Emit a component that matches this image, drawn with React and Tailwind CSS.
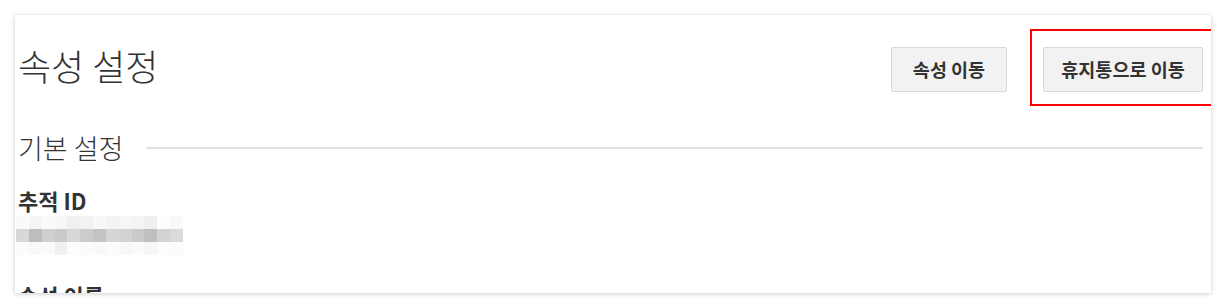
const font = { fontFamily: '"Noto Sans CJK KR", "Noto Sans", sans-serif' };

const blurTop = ["#fafafa", "#f5f5f5", "#fafafa", "#f8f8f8", "#f0f0f0", "#f2f2f2", "#f8f8f8", "#f3f3f3", "#f6f6f6", "#f4f4f4", "#efefef", "#fdfdfd", "#f9f9f9"];
const blurMid = ["#d8d8d8", "#bdbdbd", "#d0d0d0", "#cacaca", "#d8d8d8", "#cccccc", "#c4c4c4", "#d6d6d6", "#d3d3d3", "#cbcbcb", "#bfbfbf", "#d3d3d3", "#dadada"];
const blurBot = ["#fbfbfb", "#f8f8f8", "#fafafa", "#f0f0f0", "#fcfcfc", "#fbfbfb", "#f9f9f9", "#fcfcfc", "#f8f8f8", "#fafafa", "#f7f7f7", "#fcfcfc", "#fbfbfb"];

function BlurredId() {
	return (
		<div className="flex flex-col w-[167px]">
			{[blurTop, blurMid, blurBot].map((row, i) => (
				<div key={i} className="flex h-[13px]">
					{row.map((c, j) => (
						<div key={j} className="flex-1" style={{ backgroundColor: c }} />
					))}
				</div>
			))}
		</div>
	);
}

export default function App() {
	return (
		<div className="bg-white w-[1226px] h-[308px] pt-[15px] pl-[15px]" style={font}>
			<div className="relative w-[1196px] h-[278px] bg-white overflow-hidden shadow-[0_1px_5px_rgba(0,0,0,0.2)]">
				{/* Header */}
				<div className="flex items-start justify-between pl-[3px] pr-[8px]">
					<h1 className="mt-[26px] text-[36px] leading-[48px] font-light text-[#333]">속성 설정</h1>
					<div className="flex gap-[36px] mt-[32px]">
						<button className="w-[116px] h-[45px] rounded-[2px] border border-[#d9d9d9] bg-[#f2f2f2] text-[18.5px] font-bold text-[#333]">
							속성 이동
						</button>
						<button className="w-[160px] h-[45px] rounded-[2px] border border-[#d9d9d9] bg-[#f2f2f2] text-[18.5px] font-bold text-[#333]">
							휴지통으로 이동
						</button>
					</div>
				</div>

				{/* Highlight box */}
				<div className="absolute left-[1015px] top-[14px] w-[190px] h-[77px] border-2 border-[#ff0000]" />

				{/* Section */}
				<div className="flex items-center h-[36px] pl-[3px] pr-[8px] mt-[38px]">
					<h2 className="text-[27px] leading-[36px] font-light text-[#333]">기본 설정</h2>
					<div className="flex-1 ml-[23px] h-[2px] bg-[#e0e0e0]" />
				</div>

				<div className="pl-[3px] mt-[19px]">
					<div className="text-[22px] leading-[30px] font-bold text-[#333]">추적 ID</div>
					<div className="mt-[1px] -ml-[3px] pl-[1px]">
						<BlurredId />
					</div>
					<div className="mt-[25px] text-[22px] leading-[30px] font-bold text-[#333]">속성 이름</div>
				</div>
			</div>
		</div>
	);
}
